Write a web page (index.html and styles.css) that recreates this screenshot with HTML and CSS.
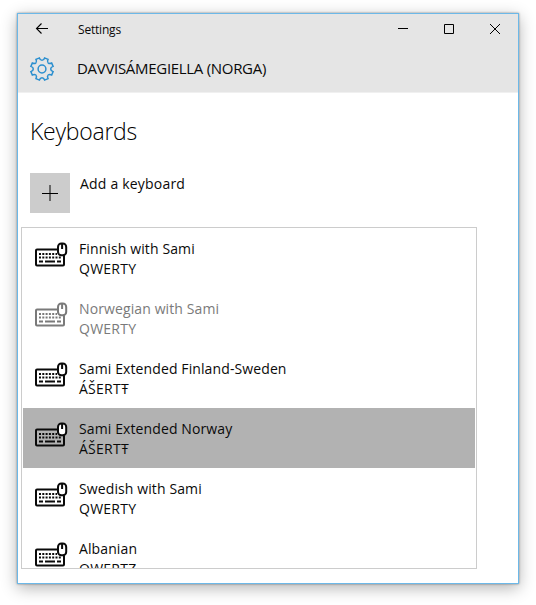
FILE: index.html
```
<!DOCTYPE html>
<html lang="en">
<head>
<meta charset="utf-8">
<title>Settings</title>
<link rel="stylesheet" href="styles.css">
</head>
<body>
<svg class="defs" aria-hidden="true">
  <symbol id="keyboard" viewBox="0 0 34 26">
    <rect x="2" y="7.500" width="28" height="16" rx="1" fill="none" stroke="currentColor" stroke-width="2"/>
    <path d="M5 12h18M5 15.500h22" fill="none" stroke="currentColor" stroke-width="1.800" stroke-dasharray="2 1.300"/>
    <path d="M5 19.500h4M11 19.500h10M23 19.500h4" stroke="currentColor" stroke-width="1.800"/>
    <rect class="mouse" x="24" y="1.500" width="8.200" height="11.800" rx="3.400" stroke="currentColor" stroke-width="2"/>
    <path d="M28.100 2v5" stroke="currentColor" stroke-width="2"/>
  </symbol>
</svg>
<main class="window">
  <header class="header">
    <div class="titlebar">
      <svg class="back" viewBox="0 0 14 12"><path d="M13 5.500H1.500M6.500 .5L1.500 5.500l5 5"/></svg>
      <span class="app-name">Settings</span>
      <div class="controls">
        <svg viewBox="0 0 12 12"><path d="M1 5.500h10"/></svg>
        <svg viewBox="0 0 12 12"><path d="M1.500 1.500h9v9h-9z"/></svg>
        <svg viewBox="0 0 12 12"><path d="M1 1l10 10M11 1l-10 10"/></svg>
      </div>
    </div>
    <div class="page-title">
      <svg class="gear" viewBox="-13 -13 26 26">
        <defs><path id="tooth" d="M0-8.700Q1.800-8.700 2.600-11.100L6-9.700Q4.880-7.420 6.150-6.150"/></defs>
        <use href="#tooth"/><use href="#tooth" transform="rotate(45)"/><use href="#tooth" transform="rotate(90)"/><use href="#tooth" transform="rotate(135)"/>
        <use href="#tooth" transform="rotate(180)"/><use href="#tooth" transform="rotate(225)"/><use href="#tooth" transform="rotate(270)"/><use href="#tooth" transform="rotate(315)"/>
        <circle r="3.900"/>
      </svg>
      <span class="language">DAVVISÁMEGIELLA (NORGA)</span>
    </div>
  </header>
  <h1 class="heading">Keyboards</h1>
  <div class="add">
    <span class="add-button"><svg viewBox="0 0 16 16"><path d="M8 0v16" stroke="#666" stroke-width="2"/><path d="M0 8.500h16" stroke="#000"/></svg></span>
    <span class="add-label">Add a keyboard</span>
  </div>
  <ul class="list">
    <li class="item"><svg class="icon"><use href="#keyboard"/></svg><div><div class="name">Finnish with Sami</div><div class="layout">QWERTY</div></div></li>
    <li class="item disabled"><svg class="icon"><use href="#keyboard"/></svg><div><div class="name">Norwegian with Sami</div><div class="layout">QWERTY</div></div></li>
    <li class="item"><svg class="icon"><use href="#keyboard"/></svg><div><div class="name">Sami Extended Finland-Sweden</div><div class="layout">ÁŠERTŦ</div></div></li>
    <li class="item selected"><svg class="icon"><use href="#keyboard"/></svg><div><div class="name">Sami Extended Norway</div><div class="layout">ÁŠERTŦ</div></div></li>
    <li class="item"><svg class="icon"><use href="#keyboard"/></svg><div><div class="name">Swedish with Sami</div><div class="layout">QWERTY</div></div></li>
    <li class="item"><svg class="icon"><use href="#keyboard"/></svg><div><div class="name">Albanian</div><div class="layout">QWERTZ</div></div></li>
  </ul>
</main>
</body>
</html>
```
FILE: styles.css
```
* { box-sizing: border-box; }
body { margin: 0; padding: 13px 17px 21px; height: 605px; overflow: hidden; background: #fff; color: #0a0a0a; font: 14px/20px "Open Sans", "Noto Sans", sans-serif; white-space: nowrap; }
.defs { position: absolute; width: 0; height: 0; }
.window { width: 502px; height: 571px; border: 1px solid #6cb8e8; background: #fff; box-shadow: 0 0 2px rgba(0,0,0,.4), 0 4px 15px rgba(0,0,0,.3); }
.header { height: 79px; background: #e5e5e5; border-bottom: 1px solid #f0f0f0; }
.titlebar { display: flex; align-items: center; height: 30px; padding-left: 17px; }
.back { width: 14px; height: 12px; fill: none; stroke: #000; stroke-width: 1.1; }
.app-name { margin-left: 29px; padding-top: 2px; font-size: 12px; letter-spacing: -.2px; }
.controls { display: flex; gap: 34px; margin-left: auto; margin-right: 17px; }
.controls svg { width: 12px; height: 12px; fill: none; stroke: #000; }
.page-title { display: flex; align-items: center; height: 49px; padding-left: 11px; }
.gear { width: 26px; height: 26px; fill: none; stroke: #2b8fcf; stroke-width: 1.5; }
.language { margin-left: 22px; padding-bottom: 2px; font-size: 15px; letter-spacing: -.3px; }
.heading { margin: 20px 0 0 12px; height: 36px; font-size: 23px; line-height: 36px; font-weight: 300; letter-spacing: -.25px; color: #000; }
.add { display: flex; margin: 24px 0 0 12px; height: 40px; }
.add-button { display: grid; place-items: center; width: 40px; height: 40px; background: #ccc; }
.add-button svg { width: 16px; height: 16px; }
.add-label { margin: 1px 0 0 10px; letter-spacing: .2px; }
.list { width: 456px; height: 342px; margin: 14px 0 0 3px; padding: 0 1px; border: 1px solid #ccc; list-style: none; overflow: hidden; }
.item { display: flex; height: 60px; padding: 11px 0 0 11px; }
.icon { width: 34px; height: 26px; margin: 3px 11px 0 0; flex: none; }
.name { letter-spacing: .11px; }
.layout { letter-spacing: .25px; }
.mouse { fill: #fff; }
.disabled { color: #7a7a7a; }
.selected { background: #b2b2b2; }
.selected .mouse { fill: #b2b2b2; }
```
